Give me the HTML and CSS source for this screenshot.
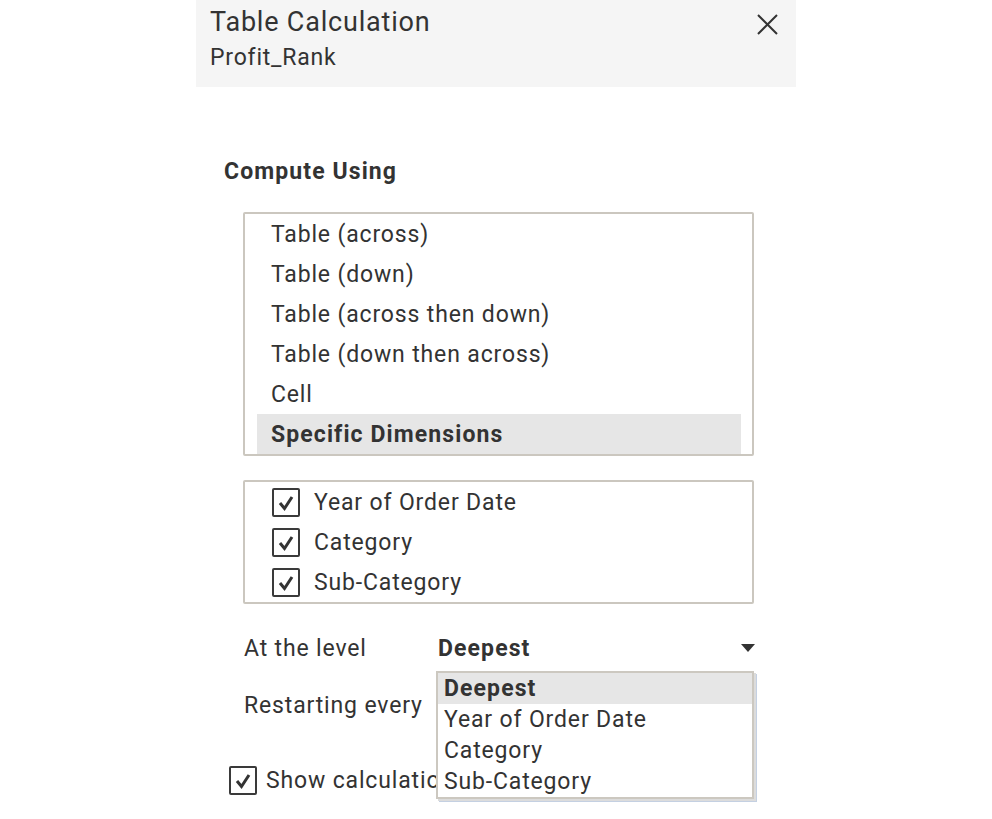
FILE: index.html
```html
<!DOCTYPE html>
<html lang="en">
<head>
<meta charset="utf-8">
<title>Table Calculation</title>
<link rel="stylesheet" href="styles.css">
</head>
<body>
<div class="panel">
  <header class="head">
    <div class="titles">
      <div class="title">Table Calculation</div>
      <div class="subtitle">Profit_Rank</div>
    </div>
    <button class="close" aria-label="Close">
      <svg width="21" height="21" viewBox="0 0 21 21"><path d="M1 1 L20 20 M20 1 L1 20" stroke="#333" stroke-width="2" fill="none"/></svg>
    </button>
  </header>
  <section class="content">
    <h2 class="section-title">Compute Using</h2>
    <ul class="listbox">
      <li class="option">Table (across)</li>
      <li class="option">Table (down)</li>
      <li class="option">Table (across then down)</li>
      <li class="option">Table (down then across)</li>
      <li class="option">Cell</li>
      <li class="option selected">Specific Dimensions</li>
    </ul>
    <ul class="dims">
      <li class="dim"><span class="cb"><svg width="24" height="25" viewBox="0 0 24 25"><path d="M6 13 L10.5 18.5 L18 7" stroke="#333" stroke-width="3" fill="none"/></svg></span>Year of Order Date</li>
      <li class="dim"><span class="cb"><svg width="24" height="25" viewBox="0 0 24 25"><path d="M6 13 L10.5 18.5 L18 7" stroke="#333" stroke-width="3" fill="none"/></svg></span>Category</li>
      <li class="dim"><span class="cb"><svg width="24" height="25" viewBox="0 0 24 25"><path d="M6 13 L10.5 18.5 L18 7" stroke="#333" stroke-width="3" fill="none"/></svg></span>Sub-Category</li>
    </ul>
    <div class="field">
      <span class="label">At the level</span>
      <div class="select">
        <span class="value">Deepest</span>
        <span class="arrow"></span>
        <ul class="popup">
          <li class="popup-item active">Deepest</li>
          <li class="popup-item">Year of Order Date</li>
          <li class="popup-item">Category</li>
          <li class="popup-item">Sub-Category</li>
        </ul>
      </div>
    </div>
    <div class="field restart">
      <span class="label">Restarting every</span>
    </div>
    <label class="show">
      <span class="cb"><svg width="24" height="25" viewBox="0 0 24 25"><path d="M6 13 L10.5 18.5 L18 7" stroke="#333" stroke-width="3" fill="none"/></svg></span>
      <span class="show-text">Show calculation assistance</span>
    </label>
  </section>
</div>
</body>
</html>
```

FILE: styles.css
```css
* { box-sizing: border-box; }
html, body {
  margin: 0;
  padding: 0;
  background: #ffffff;
  height: 819px;
  overflow: hidden;
}
body {
  font-family: Roboto, "Liberation Sans", sans-serif;
  color: #333333;
  letter-spacing: 0.85px;
}
.panel {
  width: 600px;
  margin: 0 auto;
}
.head {
  height: 87px;
  background: #f5f5f5;
  display: flex;
  justify-content: space-between;
  align-items: flex-start;
  padding: 5px 18px 0 14px;
}
.title {
  font-size: 27px;
  line-height: 34px;
  font-weight: 400;
  letter-spacing: 0.8px;
}
.subtitle {
  margin-top: 3px;
  font-size: 23px;
  line-height: 32px;
  letter-spacing: 0.8px;
}
.close {
  margin-top: 9px;
  padding: 0;
  border: 0;
  background: transparent;
  width: 21px;
  height: 21px;
  display: flex;
}
.content {
  position: relative;
}
.section-title {
  margin: 70px 0 0 28px;
  font-size: 23px;
  line-height: 30px;
  font-weight: 700;
  letter-spacing: 1.1px;
}
.listbox, .dims, .popup {
  list-style: none;
  margin: 0;
  padding: 0;
}
.listbox {
  margin: 25px 42px 0 47px;
  border: 2px solid #cbc7bf;
  border-radius: 2px;
  padding: 0 11px 0 12px;
}
.option {
  height: 40px;
  line-height: 38px;
  padding: 2px 0 0 14px;
  font-size: 23px;
}
.option.selected {
  background: #e6e6e6;
  font-weight: 700;
  letter-spacing: 1.1px;
}
.dims {
  margin: 24px 42px 0 47px;
  border: 2px solid #cbc7bf;
  border-radius: 2px;
  padding: 0 0 0 27px;
}
.dim {
  height: 40px;
  display: flex;
  align-items: center;
  gap: 14px;
  font-size: 23px;
}
.cb {
  width: 28px;
  height: 29px;
  border: 2px solid #3a3a3a;
  border-radius: 2px;
  display: flex;
  align-items: center;
  justify-content: center;
  flex-shrink: 0;
}
.field {
  display: flex;
  align-items: center;
  height: 40px;
  margin: 24px 40px 0 48px;
  font-size: 23px;
}
.field.restart {
  margin-top: 17px;
}
.label {
  width: 192px;
  flex-shrink: 0;
  white-space: nowrap;
}
.select {
  position: relative;
  flex: 1;
  display: flex;
  align-items: center;
  justify-content: space-between;
  height: 40px;
  padding-left: 2px;
}
.value {
  font-weight: 700;
  letter-spacing: 1.1px;
}
.arrow {
  width: 0;
  height: 0;
  border-left: 7px solid transparent;
  border-right: 7px solid transparent;
  border-top: 8px solid #333;
  margin-right: 1px;
}
.popup {
  position: absolute;
  top: 43px;
  left: 0;
  width: 318px;
  background: #ffffff;
  border: 2px solid #ccc8c0;
  box-shadow: 2px 2px 0 #dcdcdc, 3px 3px 0 #c4d0e2;
  z-index: 2;
}
.popup-item {
  height: 31px;
  line-height: 31px;
  padding-left: 6px;
  font-size: 23px;
  white-space: nowrap;
}
.popup-item.active {
  background: #e6e6e6;
  font-weight: 700;
  letter-spacing: 1.1px;
}
.show {
  display: flex;
  align-items: center;
  gap: 9px;
  height: 40px;
  margin: 35px 0 0 33px;
  font-size: 23px;
}
.show-text {
  white-space: nowrap;
}
```
